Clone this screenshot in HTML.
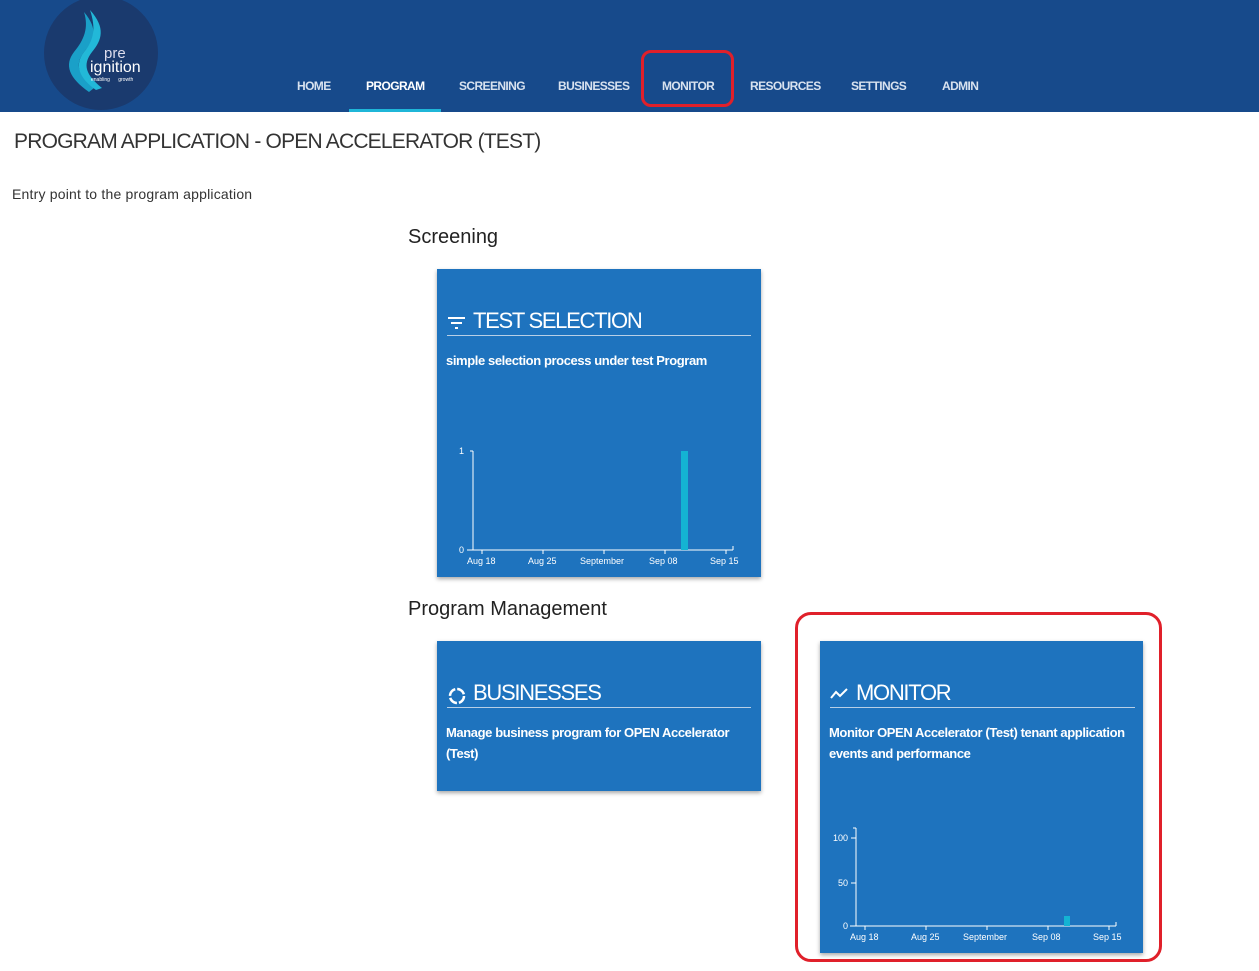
<!DOCTYPE html>
<html><head><meta charset="utf-8"><style>
*{margin:0;padding:0;box-sizing:border-box}
body{width:1259px;height:971px;background:#fff;font-family:"Liberation Sans",sans-serif;position:relative;overflow:hidden;color:#222}
.hdr{position:absolute;left:0;top:0;width:1259px;height:112px;background:#174a8b}
.nav{position:absolute;top:79px;font-size:12px;font-weight:bold;color:#d8e2ef;letter-spacing:-0.6px}
.ul{position:absolute;left:349px;top:109px;width:92px;height:3px;background:#1fb6d8}
.abs{position:absolute}
.card{position:absolute;background:#1e73be;box-shadow:0 2px 4px rgba(0,0,0,.35);color:#fff}
.ct{position:absolute;left:36px;font-size:22px;letter-spacing:-1.3px}
.line{position:absolute;left:10px;height:1px;background:#b8cfe6}
.desc{position:absolute;left:9px;font-size:13px;font-weight:bold;line-height:21px;letter-spacing:-0.4px;white-space:nowrap}
.red{position:absolute;border:3px solid #e0202a;border-radius:10px}
svg text{font-family:"Liberation Sans",sans-serif;font-size:9px;fill:#fff}
</style></head><body>
<div class="hdr">
<svg class="abs" style="left:44px;top:0" width="116" height="111" viewBox="0 0 116 111">
<circle cx="57" cy="53" r="57" fill="#1a3a6e"/>
<path d="M40 12 C55 30 50 40 40 52 C30 65 35 75 50 88 L45 92 C25 78 20 65 30 52 C40 40 45 28 40 12Z" fill="#1aa0c8"/>
<path d="M46 10 C62 28 58 40 48 52 C38 65 42 75 58 88 L52 90 C35 78 30 65 40 52 C50 40 52 28 46 10Z" fill="#22b8d8"/>
<text x="60" y="58" style="font-size:15px;fill:#dde" >pre</text>
<text x="46" y="72" style="font-size:16px;fill:#fff">ignition</text>
<text x="47" y="81" style="font-size:5px;fill:#fff">enabling&#160;&#160;&#160;&#160;&#160;&#160;growth</text>
</svg>
<div class="nav" style="left:297px">HOME</div>
<div class="nav" style="left:366px;color:#fff">PROGRAM</div>
<div class="nav" style="left:459px">SCREENING</div>
<div class="nav" style="left:558px">BUSINESSES</div>
<div class="nav" style="left:662px">MONITOR</div>
<div class="nav" style="left:750px">RESOURCES</div>
<div class="nav" style="left:851px">SETTINGS</div>
<div class="nav" style="left:942px">ADMIN</div>
<div class="ul"></div>
</div>
<div class="red" style="left:641px;top:50px;width:93px;height:57px"></div>
<div class="abs" style="left:14px;top:130px;font-size:21px;color:#333;letter-spacing:-0.8px">PROGRAM APPLICATION - OPEN ACCELERATOR (TEST)</div>
<div class="abs" style="left:12px;top:186px;font-size:14px;color:#333;letter-spacing:0.2px">Entry point to the program application</div>
<div class="abs" style="left:408px;top:226px;font-size:20px;color:#222">Screening</div>
<div class="abs" style="left:408px;top:598px;font-size:20px;color:#222">Program Management</div>

<div class="card" style="left:437px;top:269px;width:324px;height:308px">
<svg class="abs" style="left:10px;top:46px" width="20" height="16"><path d="M1 3h17M4 8h11M8 13h3" stroke="#fff" stroke-width="2"/></svg>
<div class="ct" style="top:39px">TEST SELECTION</div>
<div class="line" style="top:66px;width:304px"></div>
<div class="desc" style="top:81px">simple selection process under test Program</div>
<svg class="abs" style="left:0;top:170px" width="324" height="138">
<path d="M36 12V111M30 111H296M36 12h-3M33 111h3M45 111v4M106 111v4M167 111v4M228 111v4M289 111v4M296 111v-4" stroke="#fff" fill="none"/>
<rect x="244" y="12" width="7" height="99" fill="#14b3d3"/>
<text x="22" y="15">1</text><text x="22" y="114">0</text>
<text x="30" y="125">Aug 18</text><text x="91" y="125">Aug 25</text><text x="143" y="125">September</text><text x="212" y="125">Sep 08</text><text x="273" y="125">Sep 15</text>
</svg>
</div>

<div class="card" style="left:437px;top:641px;width:324px;height:150px">
<svg class="abs" style="left:10px;top:45px" width="20" height="20"><circle cx="10" cy="10" r="7" stroke="#fff" stroke-width="2.5" fill="none" stroke-dasharray="9 2"/></svg>
<div class="ct" style="top:39px">BUSINESSES</div>
<div class="line" style="top:66px;width:304px"></div>
<div class="desc" style="top:81px">Manage business program for OPEN Accelerator<br>(Test)</div>
</div>

<div class="card" style="left:820px;top:641px;width:323px;height:312px">
<svg class="abs" style="left:9px;top:46px" width="22" height="14"><path d="M2 11l5-6 4 4 7-7" stroke="#fff" stroke-width="2" fill="none"/></svg>
<div class="ct" style="top:39px">MONITOR</div>
<div class="line" style="top:66px;width:305px"></div>
<div class="desc" style="top:81px">Monitor OPEN Accelerator (Test) tenant application<br>events and performance</div>
<svg class="abs" style="left:0;top:180px" width="323" height="132">
<path d="M36 7V105M30 105H296M36 7h-3M31 17h5M31 62h5M45 105v4M106 105v4M167 105v4M228 105v4M289 105v4M296 105v-4" stroke="#fff" fill="none"/>
<rect x="244" y="95" width="6" height="10" fill="#14b3d3"/>
<text x="13" y="20">100</text><text x="18" y="65">50</text><text x="23" y="108">0</text>
<text x="30" y="119">Aug 18</text><text x="91" y="119">Aug 25</text><text x="143" y="119">September</text><text x="212" y="119">Sep 08</text><text x="273" y="119">Sep 15</text>
</svg>
</div>
<div class="red" style="left:795px;top:612px;width:367px;height:350px;border-radius:16px"></div>
</body></html>
